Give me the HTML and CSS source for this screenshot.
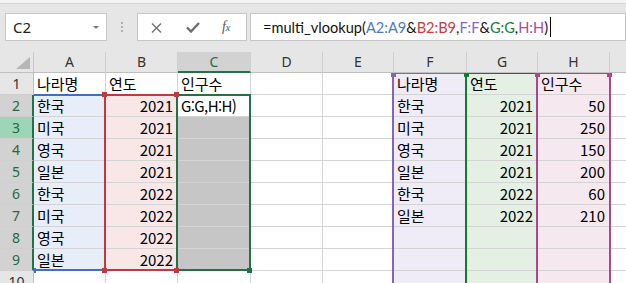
FILE: index.html
```html
<!DOCTYPE html>
<html lang="ko">
<head>
<meta charset="utf-8">
<link rel="stylesheet" href="styles.css">
</head>
<body>
<div class="app">
  <div class="topstrip"></div>
  <div class="fbar">
    <div class="namebox"><span class="nb-text">C2</span><span class="nb-arrow"></span></div>
    <div class="grip"><i></i><i></i><i></i></div>
    <div class="btns">
      <svg class="ic-x" width="11" height="10" viewBox="0 0 11 10"><path d="M1 0.5 L10 9.5 M10 0.5 L1 9.5" stroke="#6e6e6e" stroke-width="1.4" fill="none"/></svg>
      <svg class="ic-ok" width="14" height="11" viewBox="0 0 14 11"><path d="M1 5.5 L5 9.5 L13 1" stroke="#6e6e6e" stroke-width="2.4" fill="none"/></svg>
      <span class="fx">f<span class="fx-x">x</span></span>
    </div>
    <div class="formula"><span>=multi_vlookup(</span><span class="r-a">A2:A9</span><span>&amp;</span><span class="r-b">B2:B9</span><span>,</span><span class="r-f">F:F</span><span>&amp;</span><span class="r-g">G:G</span><span>,</span><span class="r-h">H:H</span><span>)</span><span class="caret"></span></div>
  </div>

  <div class="sheet">
    <!-- column headers -->
    <div class="corner"><span class="tri"></span></div>
    <div class="ch">A</div><div class="ch">B</div><div class="ch ch-sel">C</div><div class="ch">D</div><div class="ch">E</div><div class="ch">F</div><div class="ch">G</div><div class="ch">H</div><div class="ch"></div>

    <div class="rh">1</div>
    <div class="c">나라명</div><div class="c">연도</div><div class="c">인구수</div><div class="c"></div><div class="c"></div><div class="c ff">나라명</div><div class="c fg">연도</div><div class="c fh">인구수</div><div class="c"></div>

    <div class="rh rh-sel">2</div>
    <div class="c fa">한국</div><div class="c fb n">2021</div><div class="c active">G:G,H:H)</div><div class="c"></div><div class="c"></div><div class="c ff">한국</div><div class="c fg n">2021</div><div class="c fh n">50</div><div class="c"></div>

    <div class="rh rh-hot">3</div>
    <div class="c fa">미국</div><div class="c fb n">2021</div><div class="c fs"></div><div class="c"></div><div class="c"></div><div class="c ff">미국</div><div class="c fg n">2021</div><div class="c fh n">250</div><div class="c"></div>

    <div class="rh rh-sel">4</div>
    <div class="c fa">영국</div><div class="c fb n">2021</div><div class="c fs"></div><div class="c"></div><div class="c"></div><div class="c ff">영국</div><div class="c fg n">2021</div><div class="c fh n">150</div><div class="c"></div>

    <div class="rh rh-sel">5</div>
    <div class="c fa">일본</div><div class="c fb n">2021</div><div class="c fs"></div><div class="c"></div><div class="c"></div><div class="c ff">일본</div><div class="c fg n">2021</div><div class="c fh n">200</div><div class="c"></div>

    <div class="rh rh-sel">6</div>
    <div class="c fa">한국</div><div class="c fb n">2022</div><div class="c fs"></div><div class="c"></div><div class="c"></div><div class="c ff">한국</div><div class="c fg n">2022</div><div class="c fh n">60</div><div class="c"></div>

    <div class="rh rh-sel">7</div>
    <div class="c fa">미국</div><div class="c fb n">2022</div><div class="c fs"></div><div class="c"></div><div class="c"></div><div class="c ff">일본</div><div class="c fg n">2022</div><div class="c fh n">210</div><div class="c"></div>

    <div class="rh rh-sel">8</div>
    <div class="c fa">영국</div><div class="c fb n">2022</div><div class="c fs"></div><div class="c"></div><div class="c"></div><div class="c ff"></div><div class="c fg"></div><div class="c fh"></div><div class="c"></div>

    <div class="rh rh-sel">9</div>
    <div class="c fa">일본</div><div class="c fb n">2022</div><div class="c fs"></div><div class="c"></div><div class="c"></div><div class="c ff"></div><div class="c fg"></div><div class="c fh"></div><div class="c"></div>

    <div class="rh">10</div>
    <div class="c"></div><div class="c"></div><div class="c"></div><div class="c"></div><div class="c"></div><div class="c ff"></div><div class="c fg"></div><div class="c fh"></div><div class="c"></div>

    <!-- range highlight overlays -->
    <div class="rng rng-a"></div>
    <div class="rng rng-b"></div>
    <div class="rng rng-c"></div>
    <div class="rng rng-f"></div>
    <div class="rng rng-g"></div>
    <div class="rng rng-h"></div>

    <span class="sq sq-a1"></span>
    <span class="sq sq-b1"></span><span class="sq sq-b2"></span><span class="sq sq-b3"></span><span class="sq sq-b4"></span>
    <span class="sq sq-fill"></span>
    <span class="sq sq-f1"></span><span class="sq sq-g1"></span><span class="sq sq-h1"></span><span class="sq sq-h2"></span>
  </div>
</div>
</body>
</html>
```

FILE: styles.css
```css
* { box-sizing: border-box; margin: 0; padding: 0; }
html, body { width: 626px; height: 283px; overflow: hidden; }
body { background: #e6e6e6; font-family: "Noto Sans CJK KR", "Noto Sans", sans-serif; color: #000; }

.app { width: 626px; height: 283px; overflow: hidden; background: #e6e6e6; }

.topstrip { height: 4px; background: #f3f3f3; border-bottom: 1px solid #d4d4d4; }

.fbar { height: 48px; display: flex; align-items: flex-start; padding: 9px 0 0 5px; }

.namebox { width: 102px; height: 28px; background: #fff; border: 1px solid #c6c6c6; display: flex; align-items: center; justify-content: space-between; padding: 0 7px 0 7px; }
.nb-text { font-family: "Noto Sans", sans-serif; font-size: 15px; color: #222; }
.nb-arrow { width: 0; height: 0; border-left: 3px solid transparent; border-right: 3px solid transparent; border-top: 3px solid #7a7a7a; margin-top: 1px; }

.grip { width: 2px; margin: 9px 14px 0 14px; display: flex; flex-direction: column; gap: 2px; }
.grip i { display: block; width: 2px; height: 2px; background: #b0b0b0; }

.btns { width: 110px; height: 28px; background: #fff; border: 1px solid #c6c6c6; display: flex; align-items: center; padding-left: 13px; }
.ic-x { margin-top: 1px; }
.ic-ok { margin-left: 24px; margin-top: 1px; }
.fx { margin-left: 22px; font-family: "Liberation Serif", serif; font-style: italic; font-size: 14px; color: #5a5a5a; letter-spacing: -0.5px; }
.fx-x { font-size: 11px; }

.formula { width: 376px; height: 28px; margin-left: 3px; background: #fff; border: 1px solid #c6c6c6; display: flex; align-items: center; padding-left: 12px; font-family: "Lato", "Noto Sans", sans-serif; font-size: 14.6px; color: #111; white-space: pre; }
.r-a { color: #4a79c9; }
.r-b { color: #cd3b3d; }
.r-f { color: #8a64c6; }
.r-g { color: #187a3c; }
.r-h { color: #ad4a9c; }
.caret { display: inline-block; width: 1px; height: 20px; background: #000; margin-left: 2px; }

.sheet { position: relative; display: grid; grid-template-columns: 34px 72px 72px 73px 72px 71px 73px 71px 72px 17px; grid-template-rows: 21px repeat(10, 22px); background: #fff; }

.corner { position: relative; z-index: 5; background: #e6e6e6; border-right: 1px solid #c8c8c8; border-bottom: 1px solid #c0c0c0; }
.tri { position: absolute; right: 3px; bottom: 3px; width: 0; height: 0; border-left: 14px solid transparent; border-bottom: 12px solid #b6b6b6; }

.ch { position: relative; z-index: 5; background: #e6e6e6; border-right: 1px solid #cfcfcf; border-bottom: 1px solid #c0c0c0; text-align: center; font-family: "Noto Sans", sans-serif; font-size: 14px; line-height: 20px; color: #333; }
.ch-sel { background: #d2d2d2; border-bottom: 2px solid #217346; color: #1e6b41; }

.rh { position: relative; z-index: 5; background: #e6e6e6; border-right: 1px solid #c0c0c0; border-bottom: 1px solid #cfcfcf; text-align: center; font-family: "Noto Sans", sans-serif; font-size: 14px; line-height: 22px; color: #333; }
.rh-sel { background: #d2d2d2; border-right: 2px solid #217346; color: #1e6b41; }
.rh-hot { background: #9fd5b7; border-right: 2px solid #217346; color: #1e6b41; }

.c { border-right: 1px solid #d4d4d4; border-bottom: 1px solid #d4d4d4; padding: 0 3px 0 3px; font-size: 15px; line-height: 21px; white-space: nowrap; overflow: hidden; }
.n { text-align: right; padding-right: 4px; }
.active { background: #fff; letter-spacing: -0.6px; }
.fa { background: #e7eef9; }
.fb { background: #f9e7e7; }
.fs { background: #c6c6c6; }
.ff { background: #efebf7; }
.fg { background: #e3f0e3; }
.fh { background: #f6e8ef; }

.rng { position: absolute; z-index: 2; pointer-events: none; border: 2px solid transparent; }
.rng-a { left: 34px; top: 42px; width: 72px; height: 177px; border-color: #3f6fc3; border-left: 0; }
.rng-b { left: 104px; top: 42px; width: 74px; height: 177px; border-color: #c0393f; }
.rng-c { left: 176px; top: 42px; width: 75px; height: 177px; border-color: #217346; }
.rng-f { left: 392px; top: 20px; width: 75px; height: 300px; border-color: #8763c0; }
.rng-g { left: 465px; top: 20px; width: 73px; height: 300px; border-color: #0e7d2f; }
.rng-h { left: 536px; top: 20px; width: 75px; height: 300px; border-color: #b0458b; }

.sq { position: absolute; z-index: 3; width: 5px; height: 5px; }
.sq-a1 { left: 34px; top: 216px; width: 2px; background: #3f6fc3; }
.sq-b1 { left: 102px; top: 40px; background: #c0393f; }
.sq-b2 { left: 174px; top: 40px; background: #c0393f; }
.sq-b3 { left: 102px; top: 216px; background: #c0393f; }
.sq-b4 { left: 174px; top: 216px; background: #c0393f; }
.sq-fill { left: 247px; top: 216px; background: #217346; }
.sq-f1 { left: 391px; top: 20px; background: #8763c0; }
.sq-g1 { left: 464px; top: 20px; background: #0e7d2f; }
.sq-h1 { left: 535px; top: 20px; background: #b0458b; }
.sq-h2 { left: 607px; top: 20px; background: #b0458b; }
```
